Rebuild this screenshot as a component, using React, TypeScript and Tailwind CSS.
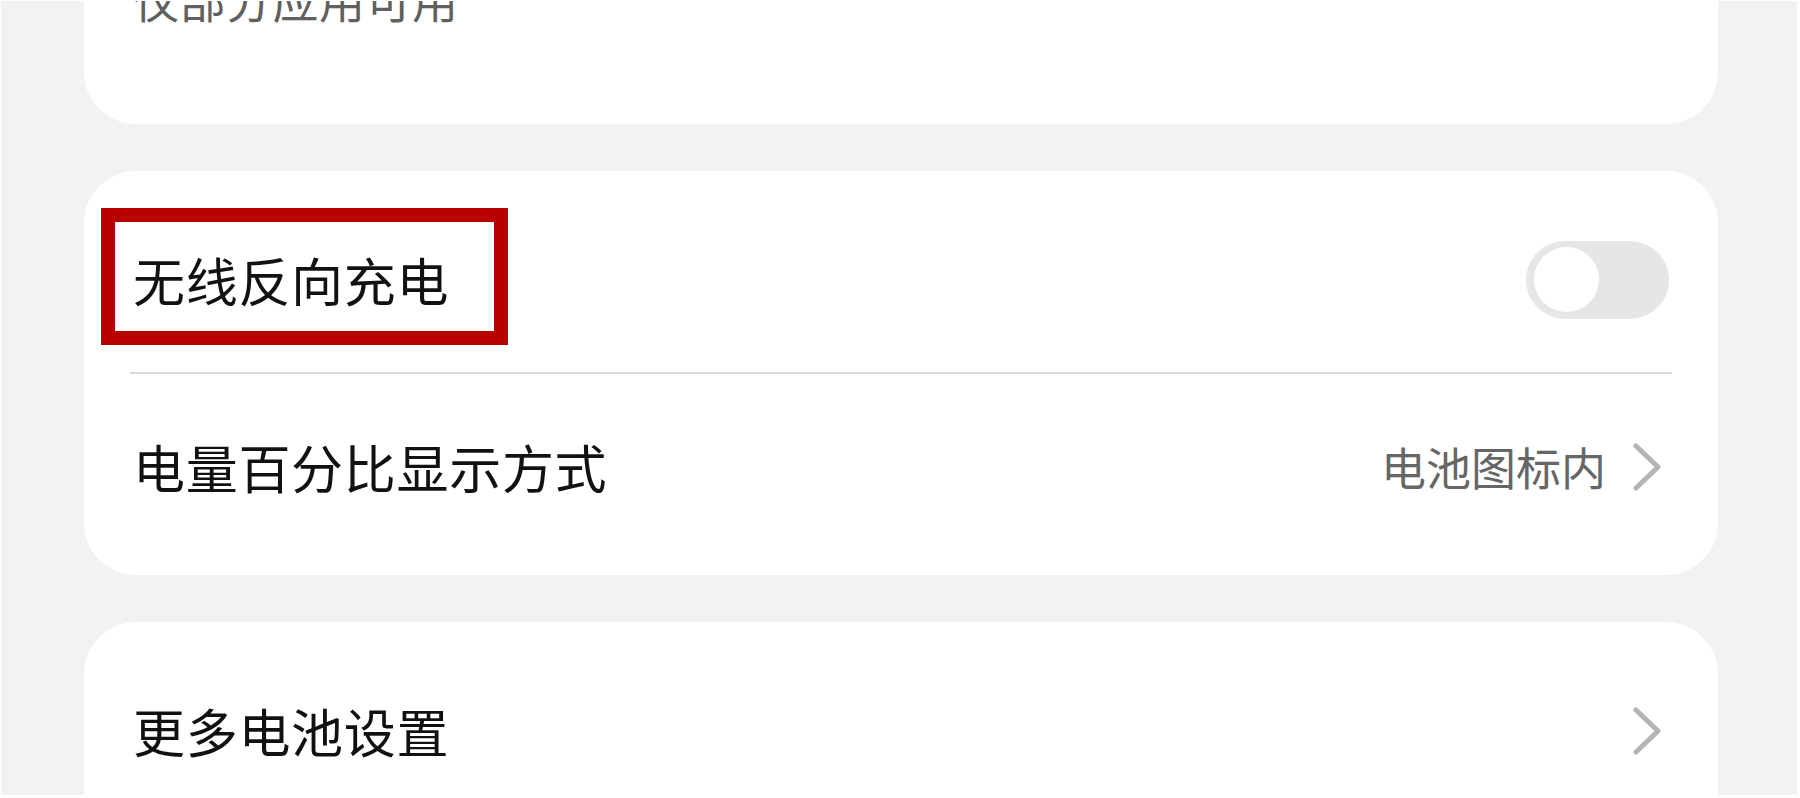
import React from "react";

const font = { fontFamily: '"Noto Sans CJK SC", "Noto Sans", sans-serif' };

function Chevron() {
  return (
    <svg width="28" height="48" viewBox="0 0 28 48" className="mr-[11px] shrink-0">
      <polyline
        points="3,3 25,24 3,45"
        fill="none"
        stroke="#b4b4b4"
        strokeWidth="5"
        strokeLinecap="round"
        strokeLinejoin="round"
      />
    </svg>
  );
}

function Toggle() {
  return (
    <div className="mr-[3px] w-[143px] h-[78px] rounded-full bg-[#e6e6e6] flex items-center pl-[8px]">
      <div className="w-[65px] h-[65px] rounded-full bg-white" />
    </div>
  );
}

export default function App() {
  return (
    <div
      className="w-[1800px] h-[798px] bg-white pl-[1px] pt-[1px] pr-[3px] pb-[3px] overflow-hidden"
      style={font}
    >
      <div className="h-full bg-[#f1f2f4] pl-[83px] pr-[79px] overflow-hidden">
        {/* Card 1 (scrolled off the top) */}
        <div className="-mt-[26px] bg-white rounded-b-[52px] pl-[49px] pb-[103px]">
          <p className="text-[46px] leading-[46px] tracking-[0.5px] text-[#606060]">仅部分应用可用</p>
        </div>

        {/* Card 2 */}
        <div className="mt-[47px] bg-white rounded-[52px] py-[16px]">
          <div className="relative h-[185px] flex items-center justify-between pl-[49px] pr-[46px]">
            <span className="text-[52px] leading-none tracking-[0.7px] text-[#111111]">无线反向充电</span>
            <Toggle />
            {/* annotation box */}
            <div className="absolute left-[17px] top-[21px] w-[407px] h-[137px] border-[14px] border-[#b90000]" />
          </div>
          <div className="mx-[46px] h-[2px] bg-[#d9d9d9]" />
          <div className="h-[185px] flex items-center justify-between pl-[49px] pr-[46px]">
            <span className="text-[52px] leading-none tracking-[0.7px] text-[#111111]">电量百分比显示方式</span>
            <div className="flex items-center gap-[27px]">
              <span className="text-[45px] leading-none text-[#666666]">电池图标内</span>
              <Chevron />
            </div>
          </div>
        </div>

        {/* Card 3 */}
        <div className="mt-[47px] bg-white rounded-[52px] py-[16px] h-[400px]">
          <div className="h-[185px] flex items-center justify-between pl-[49px] pr-[46px]">
            <span className="text-[52px] leading-none tracking-[0.7px] text-[#111111]">更多电池设置</span>
            <Chevron />
          </div>
        </div>
      </div>
    </div>
  );
}
